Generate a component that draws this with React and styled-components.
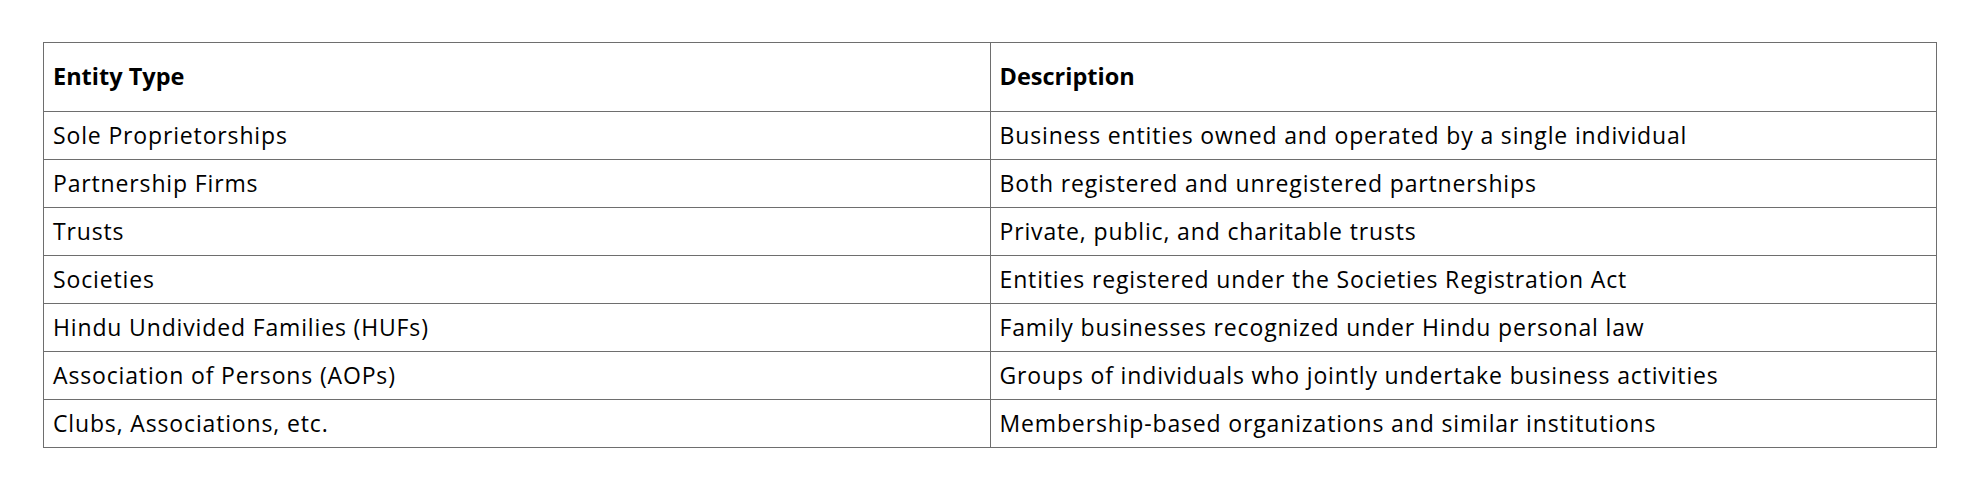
import React from "react";
import styled, { createGlobalStyle } from "styled-components";

const Global = createGlobalStyle`
  html, body { margin: 0; padding: 0; background: #ffffff; }
  body { font-family: "Open Sans", "Noto Sans", sans-serif; color: #000; }
`;

const Page = styled.div`
  padding: 42px 44px 0 43px;
`;

const Table = styled.table`
  width: 1894px;
  border-collapse: collapse;
  table-layout: fixed;
`;

const HeadCell = styled.th`
  height: 66px;
  padding: 0 0 2px 9px;
  border: 1px solid #6e6e6e;
  text-align: left;
  font-weight: 700;
  font-size: 23.5px;
  vertical-align: middle;
`;

const Cell = styled.td`
  height: 46px;
  padding: 0 0 1px 9px;
  border: 1px solid #6e6e6e;
  font-size: 23px;
  letter-spacing: 0.85px;
  font-weight: 400;
  vertical-align: middle;
`;

const rows = [
  ["Sole Proprietorships", "Business entities owned and operated by a single individual"],
  ["Partnership Firms", "Both registered and unregistered partnerships"],
  ["Trusts", "Private, public, and charitable trusts"],
  ["Societies", "Entities registered under the Societies Registration Act"],
  ["Hindu Undivided Families (HUFs)", "Family businesses recognized under Hindu personal law"],
  ["Association of Persons (AOPs)", "Groups of individuals who jointly undertake business activities"],
  ["Clubs, Associations, etc.", "Membership-based organizations and similar institutions"],
];

export default function App() {
  return (
    <>
      <Global />
      <Page>
        <Table>
          <thead>
            <tr>
              <HeadCell>Entity Type</HeadCell>
              <HeadCell>Description</HeadCell>
            </tr>
          </thead>
          <tbody>
            {rows.map(([a, b]) => (
              <tr key={a}>
                <Cell>{a}</Cell>
                <Cell>{b}</Cell>
              </tr>
            ))}
          </tbody>
        </Table>
      </Page>
    </>
  );
}
